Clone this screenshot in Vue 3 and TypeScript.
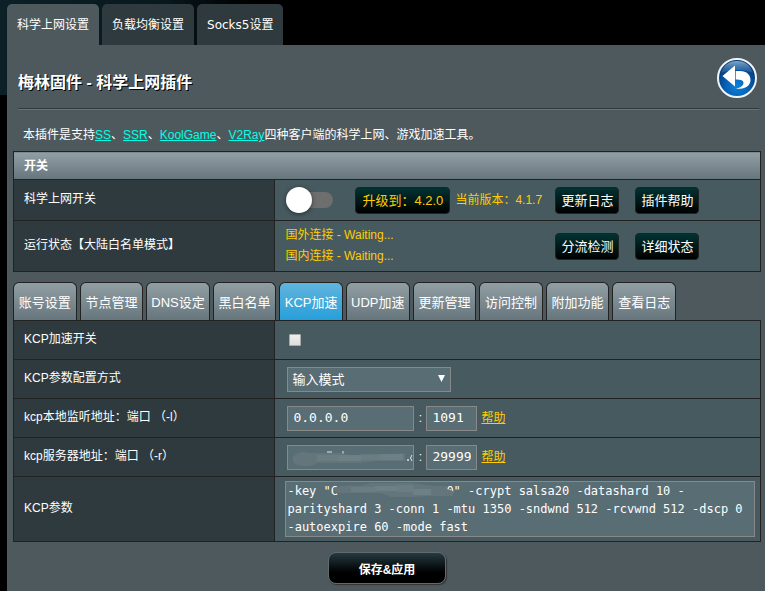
<script setup lang="ts">
import { ref } from 'vue'

const pageTabs = ['科学上网设置', '负载均衡设置', 'Socks5设置']
const activePage = ref(0)

const clients = ['SS', 'SSR', 'KoolGame', 'V2Ray']

const sections = [
  '账号设置', '节点管理', 'DNS设定', '黑白名单', 'KCP加速',
  'UDP加速', '更新管理', '访问控制', '附加功能', '查看日志',
]
const activeSection = ref(4)

const enabled = ref(false)
const kcpEnabled = ref(false)
const mode = ref('input')
const listenHost = ref('0.0.0.0')
const listenPort = ref('1091')
const serverHost = ref('')
const serverPort = ref('29999')
const hidden = '\u00a0'.repeat(15)
const kcpParams = ref(
  `-key "C${hidden}0" -crypt salsa20 -datashard 10 -parityshard 3 -conn 1 -mtu 1350 -sndwnd 512 -rcvwnd 512 -dscp 0 -autoexpire 60 -mode fast`,
)
</script>

<template>
  <div class="page">
    <nav class="page-tabs">
      <button
        v-for="(tab, i) in pageTabs"
        :key="tab"
        type="button"
        class="page-tab"
        :class="{ active: i === activePage }"
        @click="activePage = i"
      >{{ tab }}</button>
    </nav>

    <main class="panel">
      <header class="title-bar">
        <h1>梅林固件 - 科学上网插件</h1>
        <a href="#" class="back" aria-label="返回">
          <svg width="40" height="40" viewBox="0 0 40 40">
            <defs>
              <radialGradient id="ball" cx="50%" cy="72%" r="58%">
                <stop offset="0" stop-color="#0b83d8" />
                <stop offset="0.5" stop-color="#0763b8" />
                <stop offset="1" stop-color="#053a78" />
              </radialGradient>
              <linearGradient id="gloss" x1="0" y1="0" x2="0" y2="1">
                <stop offset="0" stop-color="#8fb4d2" stop-opacity="0.9" />
                <stop offset="1" stop-color="#3f7fb8" stop-opacity="0.35" />
              </linearGradient>
            </defs>
            <circle cx="20" cy="20" r="19" fill="url(#ball)" stroke="#eef3f7" stroke-width="2" />
            <path d="M4 15 C7 6 13 3 20 3 C27 3 33 6 36 15 C28 11 14 11 4 15Z" fill="url(#gloss)" />
            <path d="M5.500 18 L18 7.500 V28.500Z" fill="#fff" />
            <path d="M18.700 13 H23 C30 13 33.500 17 33.500 22 C33.500 28 28 31.200 18.700 31 C23.500 29.500 26.300 28 26.500 25 C26.500 22.300 24 21.500 18.700 21.500Z" fill="#fff" />
          </svg>
        </a>
      </header>

      <p class="intro">
        本插件是支持<template v-for="(c, i) in clients" :key="c"><a href="#">{{ c }}</a><template v-if="i < clients.length - 1">、</template></template>四种客户端的科学上网、游戏加速工具。
      </p>

      <table class="form-table">
        <colgroup>
          <col class="label-col" />
          <col />
        </colgroup>
        <thead>
          <tr><th colspan="2" class="head">开关</th></tr>
        </thead>
        <tbody>
          <tr class="row-switch">
            <th scope="row"><label for="main-switch">科学上网开关</label></th>
            <td>
              <div class="grid">
                <input id="main-switch" v-model="enabled" type="checkbox" class="switch" />
                <button type="button" class="btn gold">升级到：4.2.0</button>
                <span class="version">当前版本：4.1.7</span>
                <button type="button" class="btn">更新日志</button>
                <button type="button" class="btn">插件帮助</button>
              </div>
            </td>
          </tr>
          <tr class="row-status">
            <th scope="row">运行状态【大陆白名单模式】</th>
            <td>
              <div class="grid">
                <div class="status">国外连接 - Waiting...<br />国内连接 - Waiting...</div>
                <button type="button" class="btn">分流检测</button>
                <button type="button" class="btn">详细状态</button>
              </div>
            </td>
          </tr>
        </tbody>
      </table>

      <nav class="section-tabs">
        <button
          v-for="(s, i) in sections"
          :key="s"
          type="button"
          class="section-tab"
          :class="{ active: i === activeSection }"
          @click="activeSection = i"
        >{{ s }}</button>
      </nav>

      <table class="form-table">
        <colgroup>
          <col class="label-col" />
          <col />
        </colgroup>
        <tbody>
          <tr class="row">
            <th scope="row"><label for="kcp-on">KCP加速开关</label></th>
            <td><div class="fields"><input id="kcp-on" v-model="kcpEnabled" type="checkbox" class="check" /></div></td>
          </tr>
          <tr class="row">
            <th scope="row"><label for="kcp-mode">KCP参数配置方式</label></th>
            <td>
              <div class="fields">
                <div class="select-box">
                  <select id="kcp-mode" v-model="mode" class="select">
                    <option value="input">输入模式</option>
                  </select>
                  <svg class="arrow" width="7" height="7" viewBox="0 0 7 7"><path d="M0 0H7L3.5 7Z" fill="#fff" /></svg>
                </div>
              </div>
            </td>
          </tr>
          <tr class="row">
            <th scope="row"><label for="listen-host">kcp本地监听地址：端口 （-l）</label></th>
            <td>
              <div class="fields">
                <input id="listen-host" v-model="listenHost" type="text" class="text host" />
                <span class="colon">:</span>
                <input v-model="listenPort" type="text" class="text port" aria-label="本地监听端口" />
                <a href="#" class="help">帮助</a>
              </div>
            </td>
          </tr>
          <tr class="row">
            <th scope="row"><label for="server-host">kcp服务器地址：端口 （-r）</label></th>
            <td>
              <div class="fields">
                <div class="masked">
                  <input id="server-host" v-model="serverHost" type="text" class="text host" />
                  <svg class="smudge" width="124" height="22" viewBox="0 0 124 22">
                    <path d="M38 6H43M54 5V8M123 9Q120 12 123 15" stroke="#dfe5e7" stroke-width="1" fill="none" />
                    <path d="M4 11Q10 4 20 7H52L60 9H94L116 7V15H88L70 17H28Q22 21 12 20Q2 18 4 11Z" fill="#64767b" />
                    <path d="M28 9H50V15H28ZM72 8H92V14H72Z" fill="#788a8e" opacity="0.4" />
                    <path d="M50 9H72V15H50ZM92 8H114V14H92Z" fill="#6d8085" />
                    <path d="M118 14H120" stroke="#dfe5e7" stroke-width="1.500" />
                  </svg>
                </div>
                <span class="colon">:</span>
                <input v-model="serverPort" type="text" class="text port" aria-label="服务器端口" />
                <a href="#" class="help">帮助</a>
              </div>
            </td>
          </tr>
          <tr class="row-params">
            <th scope="row"><label for="kcp-params">KCP参数</label></th>
            <td>
              <div class="params">
                <textarea id="kcp-params" v-model="kcpParams" rows="3" spellcheck="false"></textarea>
                <svg class="smudge key" width="124" height="16" viewBox="0 0 124 16">
                  <path d="M2 6Q14 2 28 4L40 1H80L104 4H116V7L122 9V14H96L84 15H60L50 11H12Q4 12 2 6Z" fill="#64767b" />
                  <path d="M20 5H44V10H20ZM66 3H82V10H66Z" fill="#788a8e" opacity="0.4" />
                  <path d="M44 4H66V9H44ZM82 7H100V13H82Z" fill="#6d8085" />
                </svg>
              </div>
            </td>
          </tr>
        </tbody>
      </table>

      <div class="actions">
        <button type="button" class="save">保存&amp;应用</button>
      </div>
    </main>
  </div>
</template>

<style>
body {
  margin: 0;
  background: #000;
}
</style>

<style scoped>
.page {
  box-sizing: border-box;
  min-height: 100vh;
  display: flex;
  flex-direction: column;
  padding: 4px 0 0 7px;
  background: linear-gradient(90deg, #0b2027 0, #08191e 160px, #000 250px) 0 0 / 100% 95px no-repeat #000;
  color: #fff;
  font: 12px/18px "Liberation Sans", "Noto Sans CJK SC", sans-serif;
}
button, input, select, textarea {
  font-family: inherit;
  color: inherit;
  margin: 0;
}
button {
  cursor: pointer;
  white-space: nowrap;
}
.page-tabs {
  display: flex;
  gap: 3px;
}
.page-tab {
  height: 41px;
  padding: 0 10px 2px;
  border: 0;
  border-radius: 5px 5px 0 0;
  background: #2f3a3e;
  font-family: "DejaVu Sans", "Noto Sans CJK SC", sans-serif;
  font-size: 12px;
}
.page-tab:not(:last-child) {
  font-family: "Noto Sans CJK SC", sans-serif;
}
.page-tab.active {
  background: #4d595d;
}
.panel {
  flex: 1;
  padding: 0 4px 7px 6px;
  background: #4d595d;
}
.title-bar {
  display: flex;
  justify-content: space-between;
  align-items: center;
  height: 63px;
  margin: 0 2px 0 5px;
  border-bottom: 1px solid #2f3a3e;
  box-shadow: 0 1px 0 #66757c;
}
h1 {
  margin: 12px 0 0;
  font-size: 16px;
  line-height: 24px;
  font-weight: 700;
  text-shadow: 1px 1px 0 #000;
}
.back {
  height: 40px;
  margin: 2px 2px 0 0;
}
.back svg {
  display: block;
}
.intro {
  margin: 0;
  padding: 17px 10px 7px;
}
.intro a {
  color: #00ffe4;
}
.form-table {
  width: 100%;
  table-layout: fixed;
  border-collapse: collapse;
}
.label-col {
  width: 35%;
}
.form-table th,
.form-table td {
  box-sizing: border-box;
  padding: 0 0 0 10px;
  border: 1px solid #222;
  text-align: left;
}
.form-table th {
  padding-bottom: 2px;
  background: #2f3a3e;
  font-weight: 400;
}
.form-table .head {
  height: 28px;
  padding-bottom: 0;
  background: linear-gradient(#92a0a5, #66757c);
  font-weight: 700;
}
.form-table td {
  background: #475a5f;
}
.row-switch {
  height: 41px;
}
.row-status {
  height: 51px;
}
.row {
  height: 39px;
}
.row-params {
  height: 65px;
}
.grid {
  display: grid;
  grid-template-columns: 70px 100px 100px 80px auto;
  align-items: center;
  justify-items: start;
}
.switch {
  appearance: none;
  position: relative;
  width: 47px;
  height: 16px;
  margin-left: 1px;
  border-radius: 8px;
  background: #6e6e6e;
  cursor: pointer;
}
.switch::before {
  content: "";
  position: absolute;
  left: 0;
  top: -5px;
  width: 26px;
  height: 26px;
  border-radius: 50%;
  background: #fff;
  box-shadow: 0 1px 4px rgba(0, 0, 0, 0.5);
}
.switch:checked::before {
  left: 21px;
}
.btn {
  height: 27px;
  padding: 0 5px 1px;
  border: 1px solid #222;
  border-radius: 4px;
  background: linear-gradient(#003333, #000);
  font-size: 13px;
}
.gold {
  padding: 0 6px 1px;
  color: #fc0;
}
.version,
.status {
  color: #fc0;
}
.status {
  grid-column: 1 / 4;
  line-height: 21px;
}
.section-tabs {
  display: grid;
  grid-template-columns: repeat(10, 1fr);
  gap: 3px;
  max-width: 663px;
  margin-top: 10px;
}
.section-tab {
  height: 38px;
  padding: 0;
  border: 1px solid #222;
  border-bottom: 0;
  border-radius: 6px 6px 0 0;
  background: linear-gradient(#919fa4, #67767d);
  font-size: 13px;
}
.section-tab.active {
  background: linear-gradient(#61b5de, #279fd9);
}
.fields {
  display: flex;
  align-items: center;
  padding-left: 2px;
}
.check {
  appearance: none;
  width: 12px;
  height: 12px;
  margin-left: 2px;
  border: 1px solid #aaa;
  border-radius: 1px;
  background: linear-gradient(#eee, #ddd);
}
.check:checked {
  background: #279fd9;
}
.select-box,
.masked,
.params {
  position: relative;
}
.select,
.text,
textarea {
  display: block;
  box-sizing: border-box;
  border: 1px solid #888;
  border-radius: 0;
  background: #596d74;
}
.select {
  appearance: none;
  width: 164px;
  height: 25px;
  padding: 0 4px;
  font-size: 13px;
}
.arrow {
  position: absolute;
  right: 6px;
  top: 8px;
  pointer-events: none;
}
.text {
  height: 25px;
  padding: 0 5px 2px;
  font-family: "DejaVu Sans Mono", monospace;
  font-size: 13px;
}
.host {
  width: 127px;
}
.port {
  width: 51px;
}
.colon {
  width: 12px;
  text-align: center;
}
.help {
  margin-left: 4px;
  color: #fc0;
}
.smudge {
  position: absolute;
  left: 2px;
  top: 1px;
  pointer-events: none;
}
.params {
  padding-right: 5px;
}
textarea {
  width: 100%;
  height: 56px;
  padding: 0 1px;
  resize: none;
  overflow: hidden;
  font-family: "DejaVu Sans Mono", monospace;
  font-size: 12px;
  line-height: 18px;
}
.key {
  left: 46px;
}
.actions {
  display: flex;
  justify-content: center;
  padding-top: 10px;
}
.save {
  width: 118px;
  height: 32px;
  border: 1px solid #5f6b6f;
  border-radius: 8px;
  background: linear-gradient(#263a40, #0a1114 45%, #000 65%);
  box-shadow: 1px 1px 1px #333;
  font-size: 12px;
  font-weight: 700;
}
</style>
